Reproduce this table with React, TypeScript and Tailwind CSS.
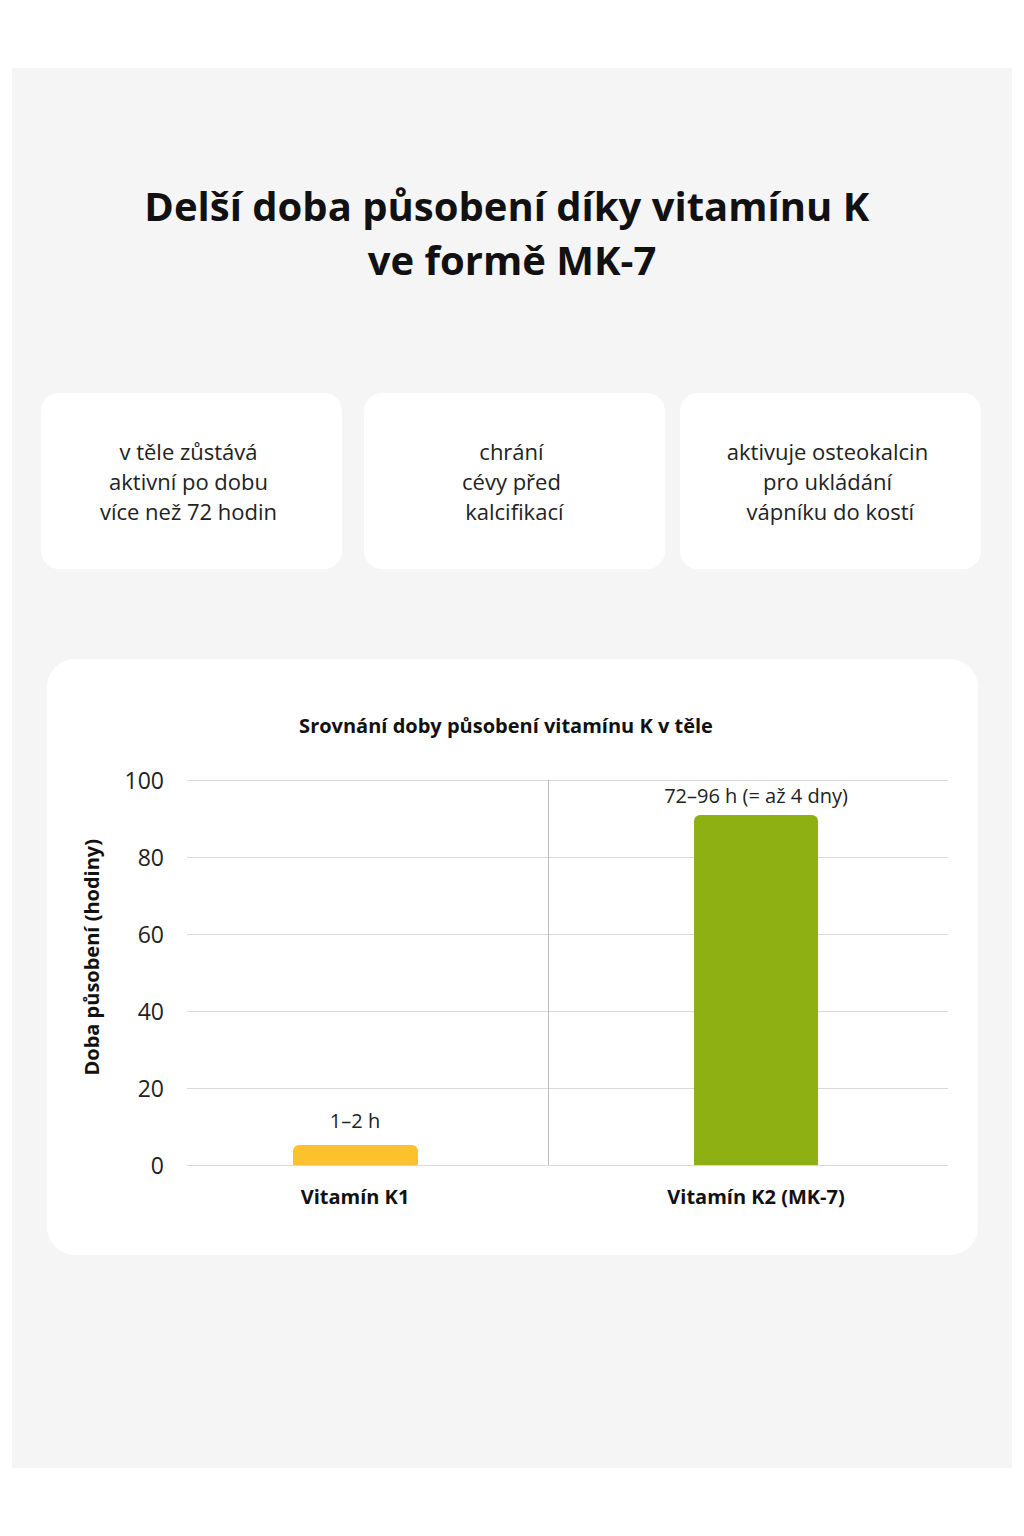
import React from "react";

const ticks = [100, 80, 60, 40, 20, 0];
const PLOT_H = 385;

export default function App() {
  return (
    <div className="min-h-[1536px] bg-white pt-[68px] px-[12px] pb-[68px]" style={{ fontFamily: '"Open Sans", "Noto Sans", sans-serif' }}>
      <div className="w-[1000px] h-[1400px] bg-[#f5f5f5] pt-[111px]">
        <h1 className="text-center font-bold text-[40px] leading-[54px] text-[#111]">
          Delší doba působení díky vitamínu K&nbsp;
          <br />
          ve formě MK-7
        </h1>

        <div className="flex mt-[106px] ml-[29px]">
          <div className="w-[301px] h-[176px] shrink-0 bg-white rounded-[18px] flex items-center justify-center text-center text-[22px] leading-[30px] text-[#222] pr-[6px]">
            <p>v těle zůstává<br />aktivní po dobu<br />více než 72 hodin</p>
          </div>
          <div className="w-[301px] h-[176px] shrink-0 ml-[22px] bg-white rounded-[18px] flex items-center justify-center text-center text-[22px] leading-[30px] text-[#222] pr-[6px]">
            <p>chrání<br />cévy před<br />&nbsp;kalcifikací</p>
          </div>
          <div className="w-[301px] h-[176px] shrink-0 ml-[15px] bg-white rounded-[18px] flex items-center justify-center text-center text-[22px] leading-[30px] text-[#222] pr-[6px]">
            <p>aktivuje osteokalcin<br />pro ukládání<br />&nbsp;vápníku do kostí</p>
          </div>
        </div>

        <div className="ml-[35px] mt-[90px] w-[931px] h-[596px] bg-white rounded-[28px] pt-[54px]">
          <h2 className="text-center font-bold text-[20px] leading-[26px] text-[#111] pr-[13px]">
            Srovnání doby působení vitamínu K v těle
          </h2>

          <div className="flex mt-[41px]">
            <div className="w-[140px] h-[385px] shrink-0 flex items-center justify-center pl-[35px] pr-[85px] pb-[30px]">
              <span className="[writing-mode:vertical-rl] rotate-180 font-bold text-[20px] leading-[24px] text-[#111] whitespace-nowrap">
                Doba působení (hodiny)
              </span>
            </div>

            <div className="relative w-[761px] h-[385px] shrink-0">
              {ticks.map((t, i) => (
                <div
                  key={t}
                  className="absolute left-0 right-0 border-t border-[#d9d9d9]"
                  style={{ top: (i * PLOT_H) / 5 }}
                >
                  <span className="absolute right-[784px] -top-[16px] text-[23px] leading-[30px] text-[#222]">{t}</span>
                </div>
              ))}
              <div className="absolute left-[361px] top-0 bottom-0 border-l border-[#bdbdbd]" />

              <div className="absolute left-0 bottom-0 h-full flex">
                <div className="w-[336px] shrink-0 h-full flex flex-col items-center justify-end">
                  <span className="text-[20px] leading-[26px] text-[#222] mb-[11px] whitespace-nowrap">1–2 h</span>
                  <div className="w-[125px] h-[20px] bg-[#fbc22d] rounded-t-[6px]" />
                </div>
                <div className="w-[466px] shrink-0 h-full flex flex-col items-center justify-end">
                  <span className="text-[20px] leading-[26px] text-[#222] mb-[6px] whitespace-nowrap">72–96 h (= až 4 dny)</span>
                  <div className="w-[124px] h-[350px] bg-[#8eb013] rounded-t-[6px]" />
                </div>
              </div>
            </div>
          </div>

          <div className="flex ml-[140px] mt-[19px]">
            <div className="w-[336px] shrink-0 text-center font-bold text-[20px] leading-[26px] text-[#111] whitespace-nowrap">Vitamín K1</div>
            <div className="w-[466px] shrink-0 text-center font-bold text-[20px] leading-[26px] text-[#111] whitespace-nowrap">Vitamín K2 (MK-7)</div>
          </div>
        </div>
      </div>
    </div>
  );
}
